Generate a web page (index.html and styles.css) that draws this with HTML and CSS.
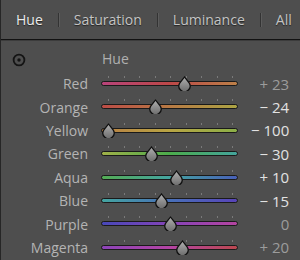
FILE: index.html
```html
<!DOCTYPE html>
<html lang="en">
<head>
    <meta charset="UTF-8">
    <title>HSL - Hue</title>
    <link rel="stylesheet" href="styles.css">
</head>
<body>
    <div class="panel">
        <div class="tabs">
            <span class="tab active">Hue</span>
            <span class="sep"></span>
            <span class="tab">Saturation</span>
            <span class="sep"></span>
            <span class="tab">Luminance</span>
            <span class="sep"></span>
            <span class="tab">All</span>
        </div>

        <div class="head">
            <svg class="target" width="14" height="14" viewBox="0 0 14 14">
                <circle cx="7" cy="7" r="5.4" fill="none" stroke="#141414" stroke-width="1.8"/>
                <circle cx="7" cy="7" r="1.7" fill="#141414"/>
            </svg>
            <span class="head-title">Hue</span>
        </div>

        <div class="rows">
            <div class="row">
                <span class="label">Red</span>
                <div class="slider">
                    <div class="ticks"><i></i><i></i><i></i><i></i><i></i><i></i><i></i><i></i><i></i></div>
                    <div class="track red"></div>
                    <svg class="thumb" style="left: 76.26px" viewBox="0 0 15 15"><use href="#drop"/></svg>
                </div>
                <span class="value dim">+ 23</span>
            </div>
            <div class="row">
                <span class="label">Orange</span>
                <div class="slider">
                    <div class="ticks"><i></i><i></i><i></i><i></i><i></i><i></i><i></i><i></i><i></i></div>
                    <div class="track orange"></div>
                    <svg class="thumb" style="left: 47.12px" viewBox="0 0 15 15"><use href="#drop"/></svg>
                </div>
                <span class="value">&minus; 24</span>
            </div>
            <div class="row">
                <span class="label">Yellow</span>
                <div class="slider">
                    <div class="ticks"><i></i><i></i><i></i><i></i><i></i><i></i><i></i><i></i><i></i></div>
                    <div class="track yellow"></div>
                    <svg class="thumb" style="left: 0px" viewBox="0 0 15 15"><use href="#drop"/></svg>
                </div>
                <span class="value">&minus; 100</span>
            </div>
            <div class="row">
                <span class="label">Green</span>
                <div class="slider">
                    <div class="ticks"><i></i><i></i><i></i><i></i><i></i><i></i><i></i><i></i><i></i></div>
                    <div class="track green"></div>
                    <svg class="thumb" style="left: 43.4px" viewBox="0 0 15 15"><use href="#drop"/></svg>
                </div>
                <span class="value">&minus; 30</span>
            </div>
            <div class="row">
                <span class="label">Aqua</span>
                <div class="slider">
                    <div class="ticks"><i></i><i></i><i></i><i></i><i></i><i></i><i></i><i></i><i></i></div>
                    <div class="track aqua"></div>
                    <svg class="thumb" style="left: 68.2px" viewBox="0 0 15 15"><use href="#drop"/></svg>
                </div>
                <span class="value">+ 10</span>
            </div>
            <div class="row">
                <span class="label">Blue</span>
                <div class="slider">
                    <div class="ticks"><i></i><i></i><i></i><i></i><i></i><i></i><i></i><i></i><i></i></div>
                    <div class="track blue"></div>
                    <svg class="thumb" style="left: 52.7px" viewBox="0 0 15 15"><use href="#drop"/></svg>
                </div>
                <span class="value">&minus; 15</span>
            </div>
            <div class="row">
                <span class="label">Purple</span>
                <div class="slider">
                    <div class="ticks"><i></i><i></i><i></i><i></i><i></i><i></i><i></i><i></i><i></i></div>
                    <div class="track purple"></div>
                    <svg class="thumb" style="left: 62px" viewBox="0 0 15 15"><use href="#drop"/></svg>
                </div>
                <span class="value dim">0</span>
            </div>
            <div class="row">
                <span class="label">Magenta</span>
                <div class="slider">
                    <div class="ticks"><i></i><i></i><i></i><i></i><i></i><i></i><i></i><i></i><i></i></div>
                    <div class="track magenta"></div>
                    <svg class="thumb" style="left: 74.4px" viewBox="0 0 15 15"><use href="#drop"/></svg>
                </div>
                <span class="value dim">+ 20</span>
            </div>
        </div>
    </div>

    <!-- shared slider knob -->
    <svg width="0" height="0" class="defs">
        <defs>
            <linearGradient id="knob" x1="0" y1="0" x2="0" y2="1">
                <stop offset="0" stop-color="#b0b0b0"/>
                <stop offset="1" stop-color="#6c6c6c"/>
            </linearGradient>
            <path id="drop" d="M7.5 1 C8.6 2.6 10.4 4.6 12.3 7.2 A5.6 5.6 0 1 1 2.7 7.2 C4.6 4.6 6.4 2.6 7.5 1 Z"
                  fill="url(#knob)" stroke="#101010" stroke-width="1.3"/>
        </defs>
    </svg>
</body>
</html>
```

FILE: styles.css
```css
body {
    margin: 0;
    background: #4e4e4e;
    font-family: "Open Sans", "DejaVu Sans", sans-serif;
}
.panel {
    width: 300px;
    height: 260px;
    background: #4e4e4e;
    border-left: 1px solid #262626;
    box-sizing: border-box;
    overflow: hidden;
}
.tabs {
    display: flex;
    align-items: center;
    gap: 15px;
    height: 39px;
    padding-left: 15px;
    border-bottom: 1px solid #121212;
    box-shadow: 0 1px 0 #3c3c3c;
}
.tab {
    font-size: 14px;
    color: #c4c4c4;
    text-shadow: 0 1px 1px rgba(0, 0, 0, 0.55);
}
.tab.active {
    color: #ececec;
}
.sep {
    width: 1px;
    height: 14px;
    background: #333;
    box-shadow: 1px 0 0 #5c5c5c;
}
.head {
    display: flex;
    align-items: center;
    height: 32px;
    padding-left: 11px;
}
.target {
    display: block;
    margin-top: 8px;
}
.head-title {
    margin-left: 76px;
    margin-top: 5px;
    font-size: 14px;
    color: #b0b0b0;
}
.rows {
    display: grid;
    grid-auto-rows: 23.4px;
}
.row {
    display: grid;
    grid-template-columns: 87px 137px 1fr;
    column-gap: 13px;
    align-items: center;
}
.label {
    text-align: right;
    font-size: 14px;
    color: #b4b4b4;
}
.slider {
    position: relative;
    height: 23.4px;
    padding-top: 4px;
    box-sizing: border-box;
}
.ticks {
    display: flex;
    justify-content: space-between;
    height: 2px;
    padding: 0 5px 0 7px;
    margin-bottom: 3px;
}
.ticks i {
    width: 1px;
    background: #7a7a7a;
}
.track {
    height: 3px;
    border: 1px solid #1a1a1a;
    border-radius: 3px;
}
.thumb {
    position: absolute;
    top: 4px;
    width: 15px;
    height: 15px;
}
.defs {
    position: absolute;
}
.value {
    justify-self: end;
    white-space: nowrap;
    padding-right: 12px;
    font-size: 15px;
    color: #e2e2e2;
}
.value.dim {
    color: #9c9c9c;
}
.red { background: linear-gradient(90deg, #b8447a, #bc4848 50%, #bc8048); }
.orange { background: linear-gradient(90deg, #bc4c46, #b87a44 50%, #aca444); }
.yellow { background: linear-gradient(90deg, #b88044, #b8a444 50%, #8cb048); }
.green { background: linear-gradient(90deg, #a0b048, #4cac4c 50%, #44a49c); }
.aqua { background: linear-gradient(90deg, #54ac54, #44a4a0 50%, #4860b8); }
.blue { background: linear-gradient(90deg, #44a4a0, #4870b8 50%, #5844b8); }
.purple { background: linear-gradient(90deg, #4848b8, #8444b8 50%, #b444a0); }
.magenta { background: linear-gradient(90deg, #8c44b8, #b444a4 50%, #bc4850); }
```
